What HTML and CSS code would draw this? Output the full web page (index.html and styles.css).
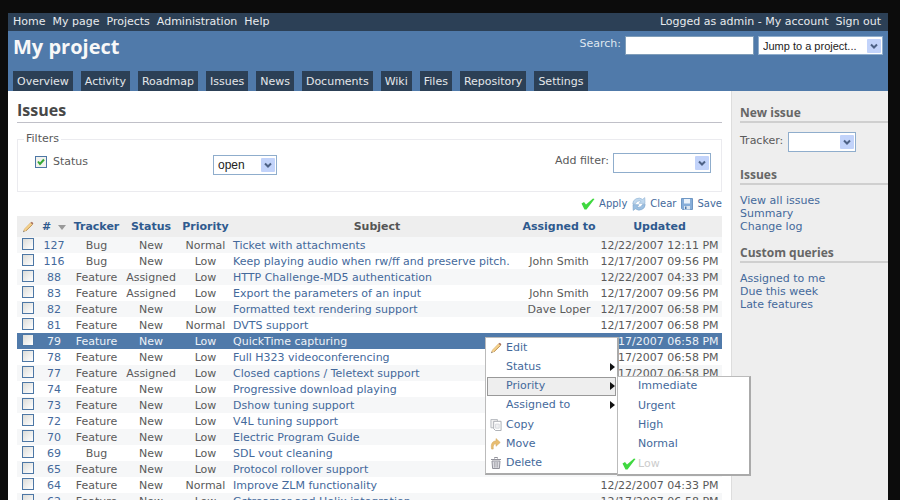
FILE: index.html
```html
<!DOCTYPE html>
<html lang="en">
<head>
    <meta charset="utf-8">
    <title>My project - Issues</title>
    <meta name="viewport" content="width=device-width, initial-scale=1.0">
    <link rel="stylesheet" href="styles.css">
</head>
<body>
    <!-- shared icons -->
    <svg class="sprite" aria-hidden="true">
        <symbol id="icon-check" viewBox="0 0 14 12">
            <path d="M0.5 5.5 L3 4 L5 6.5 L12 0.5 L13.5 1 L5.5 11.5 L3.5 11.5 Z" fill="#3fd83f"/>
        </symbol>
        <symbol id="icon-pencil" viewBox="0 0 12 12">
            <path d="M1.5 10.5 L2.5 8 L8.5 1.8 L10.5 3.4 L4.3 9.6 Z" fill="#f5d28c" stroke="#d6ab68" stroke-width="0.6"/>
            <path d="M4 9.8 L10.4 3.6" stroke="#b98a4e" stroke-width="0.8"/>
            <path d="M8.5 1.8 L9.8 0.7 L11.4 2.2 L10.5 3.4 Z" fill="#a8705c"/>
            <path d="M1 11.2 L1.7 9.6 L2.7 10.5 Z" fill="#777"/>
        </symbol>
        <symbol id="icon-reload" viewBox="0 0 14 14">
            <path d="M0.8 7 A6 5.6 0 0 1 10.6 2.4 L12.8 0.6 L13 6.5 L7 6.3 L9 4.3 A3.8 3.6 0 0 0 3.6 6.6 Z" fill="#c0d8ee" stroke="#8fb2d4" stroke-width="0.6"/>
            <path d="M13.2 7.4 A6 5.6 0 0 1 3.4 11.8 L1.2 13.4 L1 7.6 L7 7.8 L5 9.8 A3.8 3.6 0 0 0 10.4 7.6 Z" fill="#9cc0e2" stroke="#7ba3cb" stroke-width="0.6"/>
        </symbol>
        <symbol id="icon-save" viewBox="0 0 12 12">
            <path d="M0.5 0.5 H11.5 V11.5 H1.5 L0.5 10.5 Z" fill="#86add9" stroke="#6f97c4"/>
            <path d="M3 1 H9 V5.5 H3 Z" fill="#eaf2fb"/>
            <path d="M3 8 H9 V11.5 H3 Z" fill="#dbe5f0"/>
            <path d="M4 8.5 H5.5 V11 H4 Z" fill="#4f78a8"/>
        </symbol>
        <symbol id="icon-copy" viewBox="0 0 12 13">
            <path d="M0.5 0.5 H7.5 V9.5 H0.5 Z" fill="#f2f2f2" stroke="#b4b7bd"/>
            <path d="M3.5 2.5 H11.5 V12.5 H5.5 L3.5 10.5 Z" fill="#fff" stroke="#a6a9b0"/>
            <path d="M5.5 5.5 H9.5 V10 H5.5 Z" fill="#f0f0f2" stroke="#d8dade"/>
        </symbol>
        <symbol id="icon-move" viewBox="0 0 12 13">
            <path d="M1.2 12 C0 6 2.5 3.2 6 3.2 V0.6 L10.6 4.8 L6 9 V6.3 C3.8 6.3 2.6 8 3 12 Z" fill="#e8bd70" stroke="#d4a963" stroke-width="0.6"/>
        </symbol>
        <symbol id="icon-trash" viewBox="0 0 12 12">
            <path d="M4.5 1.5 V0.5 H7.5 V1.5 M1 2.5 H11" fill="none" stroke="#92929b"/>
            <path d="M2 4 H10 L9.4 11.5 H2.6 Z" fill="#dcdce2" stroke="#92929b"/>
            <path d="M4.5 5 V10.5 M6 5 V10.5 M7.5 5 V10.5" stroke="#a0a0a8" stroke-width="0.7"/>
        </symbol>
    </svg>

    <div class="wrapper">
        <div class="top-menu">
            <nav class="menu-links">
                <a href="#">Home</a>
                <a href="#">My page</a>
                <a href="#">Projects</a>
                <a href="#">Administration</a>
                <a href="#">Help</a>
            </nav>
            <div class="account">
                <span>Logged as admin - <a href="#">My account</a></span>
                <a href="#">Sign out</a>
            </div>
        </div>

        <header class="header">
            <div class="header-row">
                <h1>My project</h1>
                <form class="quick-search">
                    <label for="q">Search:</label>
                    <input type="text" id="q" class="search-box">
                    <select class="select select-project" aria-label="Project">
                        <option>Jump to a project...</option>
                    </select>
                </form>
            </div>
            <nav class="tabs">
                <a href="#">Overview</a>
                <a href="#">Activity</a>
                <a href="#">Roadmap</a>
                <a href="#">Issues</a>
                <a href="#">News</a>
                <a href="#">Documents</a>
                <a href="#">Wiki</a>
                <a href="#">Files</a>
                <a href="#">Repository</a>
                <a href="#">Settings</a>
            </nav>
        </header>

        <div class="main">
            <main class="content">
                <h2>Issues</h2>

                <fieldset class="filters">
                    <legend>Filters</legend>
                    <div class="filter-row">
                        <div class="filter-name">
                            <input type="checkbox" id="f-status" class="check" checked>
                            <label for="f-status">Status</label>
                        </div>
                        <select class="select select-status" aria-label="Status filter">
                            <option>open</option>
                        </select>
                        <div class="add-filter">
                            <label for="add-filter">Add filter:</label>
                            <select id="add-filter" class="select select-filter">
                                <option></option>
                            </select>
                        </div>
                    </div>
                </fieldset>

                <p class="buttons">
                    <a href="#"><svg class="icon icon-wide"><use href="#icon-check"/></svg>Apply</a>
                    <a href="#"><svg class="icon icon-large"><use href="#icon-reload"/></svg>Clear</a>
                    <a href="#"><svg class="icon"><use href="#icon-save"/></svg>Save</a>
                </p>

                <table class="issues">
                    <colgroup>
                        <col class="col-check">
                        <col class="col-id">
                        <col class="col-tracker">
                        <col class="col-status">
                        <col class="col-priority">
                        <col>
                        <col class="col-assigned">
                        <col class="col-updated">
                    </colgroup>
                    <thead>
                        <tr>
                            <th><svg class="icon"><use href="#icon-pencil"/></svg></th>
                            <th><a href="#" class="sort">#</a></th>
                            <th><a href="#">Tracker</a></th>
                            <th><a href="#">Status</a></th>
                            <th><a href="#">Priority</a></th>
                            <th>Subject</th>
                            <th><a href="#">Assigned to</a></th>
                            <th><a href="#">Updated</a></th>
                        </tr>
                    </thead>
                    <tbody id="issueRows">
                        <!-- Rows are added by script.js -->
                    </tbody>
                </table>

                <ul class="context-menu">
                    <li><a href="#"><svg class="icon"><use href="#icon-pencil"/></svg>Edit</a></li>
                    <li class="folder"><a href="#">Status</a></li>
                    <li class="folder open">
                        <a href="#">Priority</a>
                        <ul class="submenu">
                            <li><a href="#">Immediate</a></li>
                            <li><a href="#">Urgent</a></li>
                            <li><a href="#">High</a></li>
                            <li><a href="#">Normal</a></li>
                            <li><a href="#" class="disabled"><svg class="icon icon-wide"><use href="#icon-check"/></svg>Low</a></li>
                        </ul>
                    </li>
                    <li class="folder"><a href="#">Assigned to</a></li>
                    <li><a href="#"><svg class="icon"><use href="#icon-copy"/></svg>Copy</a></li>
                    <li><a href="#"><svg class="icon"><use href="#icon-move"/></svg>Move</a></li>
                    <li><a href="#"><svg class="icon"><use href="#icon-trash"/></svg>Delete</a></li>
                </ul>
            </main>

            <aside class="sidebar">
                <h3>New issue</h3>
                <div class="new-issue">
                    <label for="tracker">Tracker:</label>
                    <select id="tracker" class="select select-tracker">
                        <option></option>
                    </select>
                </div>
                <h3>Issues</h3>
                <div class="side-links">
                    <a href="#">View all issues</a>
                    <a href="#">Summary</a>
                    <a href="#">Change log</a>
                </div>
                <h3>Custom queries</h3>
                <div class="side-links">
                    <a href="#">Assigned to me</a>
                    <a href="#">Due this week</a>
                    <a href="#">Late features</a>
                </div>
            </aside>
        </div>
    </div>
    <script src="script.js"></script>
</body>
</html>
```

FILE: styles.css
```css
* {
    box-sizing: border-box;
}
body {
    margin: 0;
    height: 100vh;
    overflow: hidden;
    display: flex;
    padding: 13px 12px 0 8px;
    background: #0c0c0c;
    color: #5a5a5a;
    font-family: Verdana, "DejaVu Sans", sans-serif;
    font-size: 11px;
    line-height: 16px;
}
a {
    color: #44699b;
    text-decoration: none;
}
h1, h2, h3 {
    margin: 0;
    font-family: "Trebuchet MS", "Open Sans", sans-serif;
}
.sprite {
    position: absolute;
    width: 0;
    height: 0;
}
.icon {
    width: 12px;
    height: 12px;
    flex: none;
}
.icon-wide {
    width: 14px;
}
.icon-large {
    width: 14px;
    height: 14px;
}
.wrapper {
    flex: 1;
    min-width: 0;
    display: flex;
    flex-direction: column;
    background: #fff;
}

/* top bar */
.top-menu {
    display: flex;
    justify-content: space-between;
    height: 18px;
    flex: none;
    padding: 1px 7px 0 5px;
    background: #2c4056;
    color: #e8ebee;
}
.top-menu a {
    color: #e8ebee;
}
.menu-links, .account {
    display: flex;
    gap: 7px;
}

/* header */
.header {
    display: flex;
    flex-direction: column;
    justify-content: space-between;
    height: 60px;
    flex: none;
    padding: 0 5px;
    background: #507aaa;
    color: #f8f8f8;
}
.header-row {
    display: flex;
    justify-content: space-between;
}
h1 {
    font-size: 20px;
    font-weight: 700;
    line-height: 32px;
}
.quick-search {
    display: flex;
    gap: 4px;
    padding-top: 5px;
    color: #dfe7f0;
}
.search-box {
    width: 129px;
    height: 19px;
    border: 1px solid #7f9db9;
    background: #fff;
}
.tabs {
    display: flex;
    gap: 8px;
}
.tabs a {
    padding: 3px 4px 1px;
    background: #2c4056;
    color: #e4e7ea;
}

/* form controls */
.select {
    appearance: none;
    height: 20px;
    margin: 0;
    padding: 0 18px 0 4px;
    border: 1px solid #8fadcc;
    border-radius: 0;
    color: #222;
    font-family: Arial, "Liberation Sans", sans-serif;
    font-size: 12px;
    background: #fff url("data:image/svg+xml,%3Csvg xmlns='http://www.w3.org/2000/svg' width='14' height='14'%3E%3Crect width='14' height='14' rx='1' fill='%23c2d3fa'/%3E%3Cpath d='M4 5.5 L7 8.5 L10 5.5' fill='none' stroke='%234d6185' stroke-width='2'/%3E%3C/svg%3E") no-repeat right 1px center;
}
.select-project {
    width: 125px;
    height: 19px;
    font-size: 11px;
}
.select-status {
    width: 64px;
}
.select-filter {
    width: 98px;
}
.select-tracker {
    width: 68px;
}
.check {
    appearance: none;
    display: block;
    width: 12px;
    height: 12px;
    margin: 0;
    border: 1px solid #4d77a5;
    background: linear-gradient(135deg, #dcdcd8, #fff);
}
.check:checked {
    background: #f2f2ee url("data:image/svg+xml,%3Csvg xmlns='http://www.w3.org/2000/svg' width='10' height='10'%3E%3Cpath d='M2 4.5 L4 7 L8 2.5' fill='none' stroke='%2335a835' stroke-width='2'/%3E%3C/svg%3E") no-repeat center;
}

/* page body */
.main {
    display: flex;
    flex: 1;
    min-height: 0;
}
.content {
    position: relative;
    flex: 1;
    min-width: 0;
    padding: 7px 9px 0;
}
h2 {
    height: 25px;
    border-bottom: 1px solid #c0c0c8;
    color: #484848;
    font-size: 16px;
    line-height: 24px;
}
.filters {
    height: 61px;
    margin: 8px 0 0;
    padding: 6px 10px 0 17px;
    border: 1px solid #ebebef;
}
.filters legend {
    margin-left: -11px;
    padding: 0 2px;
}
.filter-row {
    display: flex;
    align-items: flex-start;
}
.filter-name {
    display: flex;
    align-items: center;
    gap: 6px;
    width: 178px;
    padding-top: 1px;
}
.select-status {
    margin-top: 2px;
}
.add-filter {
    display: flex;
    gap: 4px;
    margin-left: auto;
}
.buttons {
    display: flex;
    justify-content: flex-end;
    gap: 5px;
    margin: 4px 0;
    font-size: 10px;
}
.buttons a {
    display: flex;
    align-items: center;
    gap: 4px;
}

/* issue list */
.issues {
    width: 100%;
    table-layout: fixed;
    border-collapse: collapse;
    white-space: nowrap;
}
.col-check { width: 22px; }
.col-id { width: 30px; }
.col-tracker { width: 55px; }
.col-status { width: 54px; }
.col-priority { width: 55px; }
.col-assigned { width: 76px; }
.col-updated { width: 125px; }
.issues th {
    height: 21px;
    padding: 1px 0 0;
    background: #eee;
    color: #555;
    line-height: 20px;
}
.issues th a {
    color: #2f5a8e;
}
.issues th .icon {
    display: block;
    margin: 0 auto;
}
.sort {
    display: flex;
    align-items: center;
    justify-content: center;
    gap: 7px;
}
.sort::after {
    content: "";
    border: 4px solid transparent;
    border-top: 5px solid #999;
    border-bottom: 0;
}
.issues td {
    height: 16px;
    padding: 2px 0 0;
    line-height: 14px;
    text-align: center;
}
.issues td:first-child {
    padding: 1px 0 0 5px;
    vertical-align: top;
}
.issues .subject {
    text-align: left;
}
.issues tbody tr:nth-child(odd) {
    background: #f6f7f8;
}
.issues tbody tr.selected {
    background: #507aaa;
}
.issues .selected td, .issues .selected a {
    color: #eef2f7;
}

/* right-click menu */
.context-menu, .submenu {
    position: absolute;
    display: flex;
    flex-direction: column;
    width: 134px;
    margin: 0;
    padding: 0 1px;
    border: 1px solid #bbb;
    border-right: 2px solid #aaa;
    border-bottom: 2px solid #aaa;
    background: #fff;
    list-style: none;
}
.context-menu {
    left: 477px;
    top: 246px;
    height: 138px;
}
.submenu {
    left: 130px;
    top: -1px;
    height: 100px;
}
.context-menu li {
    position: relative;
    display: flex;
    flex: 1;
}
.context-menu a {
    position: relative;
    display: flex;
    align-items: center;
    flex: 1;
    padding-left: 18px;
    border: 1px solid transparent;
}
.context-menu a .icon {
    position: absolute;
    left: 2px;
}
.context-menu .folder > a::after {
    content: "";
    margin-left: auto;
    border: 4px solid transparent;
    border-left: 5px solid #111;
    border-right: 0;
}
.context-menu .open > a {
    border-color: #999;
    background: #eee;
}
.context-menu .disabled {
    color: #ccc;
}

/* sidebar */
.sidebar {
    width: 157px;
    padding: 13px 0 0 8px;
    border-left: 1px solid #ddd;
    background: #eee;
}
h3 {
    height: 19px;
    border-bottom: 2px solid #cfcfcf;
    color: #666;
    font-size: 12px;
    line-height: 18px;
}
.new-issue {
    display: flex;
    gap: 5px;
    margin: 9px 0 14px;
    line-height: 18px;
}
.side-links {
    display: flex;
    flex-direction: column;
    margin: 9px 0 11px;
    line-height: 13px;
}
```

FILE: script.js
```javascript
const issues = [
    [127, 'Bug', 'New', 'Normal', 'Ticket with attachments', '', '12/22/2007 12:11 PM'],
    [116, 'Bug', 'New', 'Low', 'Keep playing audio when rw/ff and preserve pitch.', 'John Smith', '12/17/2007 09:56 PM'],
    [88, 'Feature', 'Assigned', 'Low', 'HTTP Challenge-MD5 authentication', '', '12/22/2007 04:33 PM'],
    [83, 'Feature', 'Assigned', 'Low', 'Export the parameters of an input', 'John Smith', '12/17/2007 09:56 PM'],
    [82, 'Feature', 'New', 'Low', 'Formatted text rendering support', 'Dave Loper', '12/17/2007 06:58 PM'],
    [81, 'Feature', 'New', 'Normal', 'DVTS support', '', '12/17/2007 06:58 PM'],
    [79, 'Feature', 'New', 'Low', 'QuickTime capturing', '', '12/17/2007 06:58 PM'],
    [78, 'Feature', 'New', 'Low', 'Full H323 videoconferencing', '', '12/17/2007 06:58 PM'],
    [77, 'Feature', 'Assigned', 'Low', 'Closed captions / Teletext support', '', '12/17/2007 06:58 PM'],
    [74, 'Feature', 'New', 'Low', 'Progressive download playing', '', ''],
    [73, 'Feature', 'New', 'Low', 'Dshow tuning support', '', ''],
    [72, 'Feature', 'New', 'Low', 'V4L tuning support', '', ''],
    [70, 'Feature', 'New', 'Low', 'Electric Program Guide', '', ''],
    [69, 'Bug', 'New', 'Low', 'SDL vout cleaning', '', ''],
    [65, 'Feature', 'New', 'Low', 'Protocol rollover support', '', ''],
    [64, 'Feature', 'New', 'Normal', 'Improve ZLM functionality', '', '12/22/2007 04:33 PM'],
    [62, 'Feature', 'New', 'Low', 'Gstreamer and Helix integration', '', '12/17/2007 06:58 PM']
];
const selectedId = 79;

const tableBody = document.getElementById('issueRows');
issues.forEach(issue => {
    const row = tableBody.insertRow();
    if (issue[0] === selectedId) {
        row.className = 'selected';
    }

    const check = document.createElement('input');
    check.type = 'checkbox';
    check.className = 'check';
    check.setAttribute('aria-label', 'Issue ' + issue[0]);
    row.insertCell().appendChild(check);

    issue.forEach((value, i) => {
        const cell = row.insertCell();
        // id and subject link to the issue
        if (i === 0 || i === 4) {
            const link = document.createElement('a');
            link.href = '#';
            link.textContent = value;
            cell.appendChild(link);
        } else {
            cell.textContent = value;
        }
        if (i === 4) {
            cell.className = 'subject';
        }
    });
});
```
